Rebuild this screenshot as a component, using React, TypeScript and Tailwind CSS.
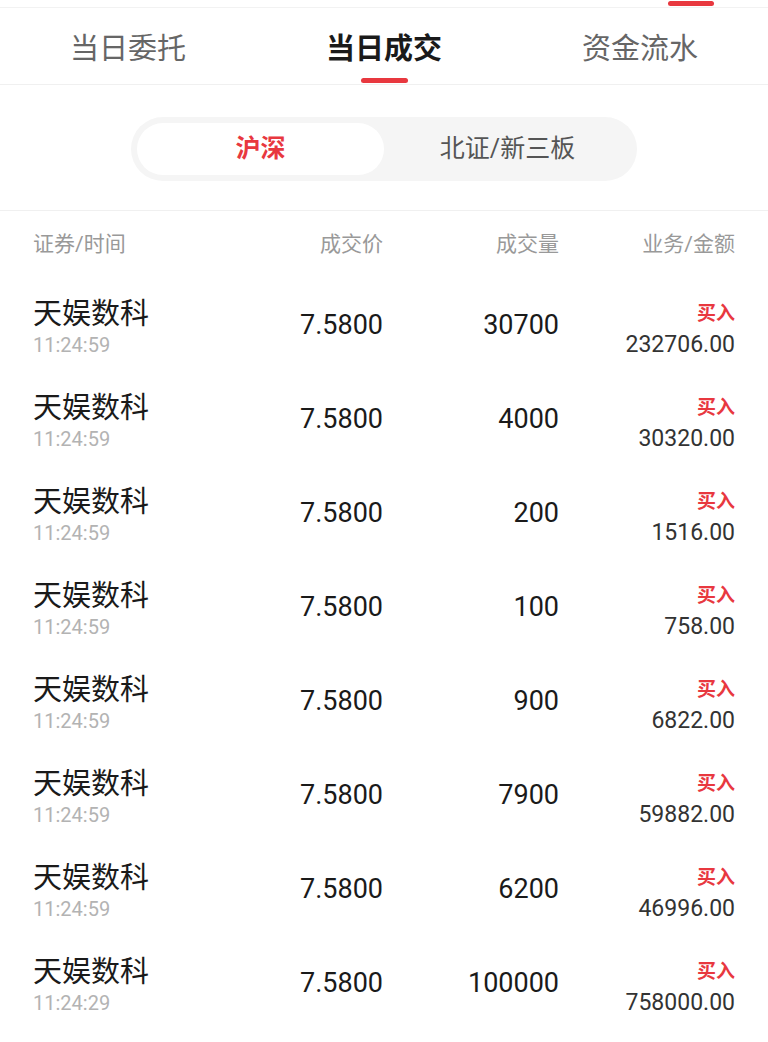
import React from 'react';

interface Trade {
  name: string;
  time: string;
  price: string;
  volume: string;
  side: string;
  amount: string;
}

const trades: Trade[] = [
  { name: '天娱数科', time: '11:24:59', price: '7.5800', volume: '30700', side: '买入', amount: '232706.00' },
  { name: '天娱数科', time: '11:24:59', price: '7.5800', volume: '4000', side: '买入', amount: '30320.00' },
  { name: '天娱数科', time: '11:24:59', price: '7.5800', volume: '200', side: '买入', amount: '1516.00' },
  { name: '天娱数科', time: '11:24:59', price: '7.5800', volume: '100', side: '买入', amount: '758.00' },
  { name: '天娱数科', time: '11:24:59', price: '7.5800', volume: '900', side: '买入', amount: '6822.00' },
  { name: '天娱数科', time: '11:24:59', price: '7.5800', volume: '7900', side: '买入', amount: '59882.00' },
  { name: '天娱数科', time: '11:24:59', price: '7.5800', volume: '6200', side: '买入', amount: '46996.00' },
  { name: '天娱数科', time: '11:24:29', price: '7.5800', volume: '100000', side: '买入', amount: '758000.00' },
];

const tabs = ['当日委托', '当日成交', '资金流水'];

const font = { fontFamily: 'Roboto, "Noto Sans CJK SC", sans-serif' };

const App: React.FC = () => {
  return (
    <div className="w-[768px] min-h-[1042px] bg-white" style={font}>
      {/* leftover strip from the bar above */}
      <div className="h-[8px] flex justify-end pr-[54px] border-b border-[#f2f2f2]">
        <div className="mt-[1px] w-[46px] h-[5px] rounded-full bg-[#e8383f]" />
      </div>

      {/* tabs */}
      <div className="grid grid-cols-3 h-[77px] border-b border-[#f0f0f0]">
        {tabs.map((t, i) => {
          const active = i === 1;
          return (
            <div key={t} className="flex flex-col items-center pt-[21px]">
              <span
                className={
                  active
                    ? 'text-[29px] leading-[40px] font-bold text-[#1a1a1a]'
                    : 'text-[29px] leading-[40px] text-[#666666]'
                }
              >
                {t}
              </span>
              <div className={active ? 'mt-[9px] w-[47px] h-[5px] rounded-full bg-[#e8383f]' : 'mt-[9px] h-[5px]'} />
            </div>
          );
        })}
      </div>

      {/* market switch */}
      <div className="flex justify-center pt-[32px] pb-[29px] border-b border-[#f0f0f0]">
        <div className="w-[506px] h-[64px] rounded-full bg-[#f5f5f5] p-[6px] flex">
          <div className="flex-1 rounded-full bg-white flex items-center justify-center">
            <span className="text-[25px] font-semibold text-[#e8383f]">沪深</span>
          </div>
          <div className="flex-1 flex items-center justify-center">
            <span className="text-[25px] text-[#555555]">北证/新三板</span>
          </div>
        </div>
      </div>

      {/* header */}
      <div className="grid grid-cols-[1fr_150px_176px_176px] px-[33px] h-[67px] items-center text-[21px] text-[#999999]">
        <span>证券/时间</span>
        <span className="text-right">成交价</span>
        <span className="text-right">成交量</span>
        <span className="text-right">业务/金额</span>
      </div>

      {/* rows */}
      {trades.map((r, i) => (
        <div key={i} className="grid grid-cols-[1fr_150px_176px_176px] px-[33px] h-[94px] items-center">
          <div className="flex flex-col pt-[6px]">
            <span className="text-[29px] leading-[34px] text-[#1a1a1a]">{r.name}</span>
            <span className="text-[20px] leading-[28px] text-[#b3b3b3]">{r.time}</span>
          </div>
          <span className="text-right text-[27px] text-[#1a1a1a]">{r.price}</span>
          <span className="text-right text-[27px] text-[#1a1a1a]">{r.volume}</span>
          <div className="flex flex-col items-end pt-[9px]">
            <span className="text-[19px] leading-[30px] font-bold text-[#e8383f]">{r.side}</span>
            <span className="text-[23px] leading-[32px] text-[#333333]">{r.amount}</span>
          </div>
        </div>
      ))}
    </div>
  );
};

export default App;
